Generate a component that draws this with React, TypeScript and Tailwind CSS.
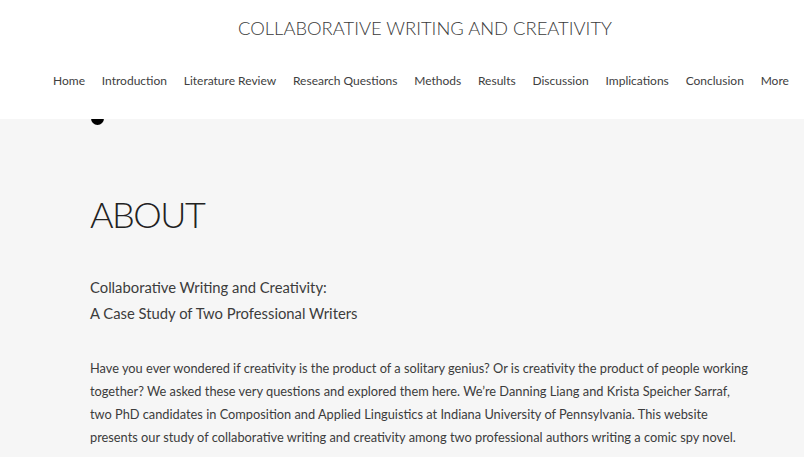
const navItems = [
  "Home",
  "Introduction",
  "Literature Review",
  "Research Questions",
  "Methods",
  "Results",
  "Discussion",
  "Implications",
  "Conclusion",
  "More",
];

const bodyLines = [
  "Have you ever wondered if creativity is the product of a solitary genius? Or is creativity the product of people working",
  "together? We asked these very questions and explored them here. We\u2019re Danning Liang and Krista Speicher Sarraf,",
  "two PhD candidates in Composition and Applied Linguistics at Indiana University of Pennsylvania. This website",
  "presents our study of collaborative writing and creativity among two professional authors writing a comic spy novel.",
];

export default function App() {
  return (
    <div className="relative w-[804px] h-[457px] overflow-hidden bg-[#f6f6f6] font-['Lato',_sans-serif]">
      <header className="relative z-10 h-[119px] bg-white flex flex-col">
        <h1 className="pt-[16px] pl-[238px] text-[18.4px] leading-[24px] font-light text-[#3a3a3a]">
          COLLABORATIVE WRITING AND CREATIVITY
        </h1>
        <nav className="mt-[33px] ml-[53px] w-[736px] flex justify-between text-[12px] leading-[16px] text-[#404040]">
          {navItems.map((item) => (
            <a key={item} className="whitespace-nowrap">
              {item}
            </a>
          ))}
        </nav>
      </header>
      <div className="absolute left-[91px] top-[112px] w-[13px] h-[13px] rounded-full bg-black" />
      <main className="pl-[90px] pt-[73px]">
        <h2 className="text-[36px] leading-[44px] font-light text-[#222] tracking-[-1.5px]">ABOUT</h2>
        <div className="mt-[38px] text-[14.8px] leading-[26px] text-[#3c3c3c]">
          <p>Collaborative Writing and Creativity:</p>
          <p>A Case Study of Two Professional Writers</p>
        </div>
        <div className="mt-[31px] text-[12.8px] leading-[23px] text-[#3c3c3c]">
          {bodyLines.map((l) => (
            <p key={l} className="whitespace-nowrap">
              {l}
            </p>
          ))}
        </div>
      </main>
    </div>
  );
}
